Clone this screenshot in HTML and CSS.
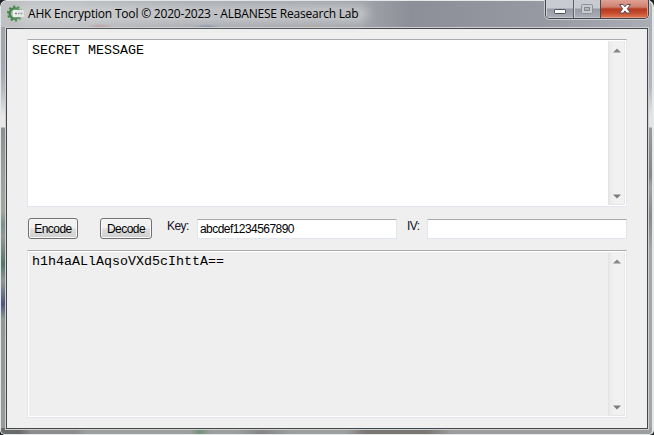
FILE: index.html
```html
<!DOCTYPE html>
<html lang="en">
<head>
<meta charset="utf-8">
<title>AHK Encryption Tool</title>
<link rel="stylesheet" href="styles.css">
</head>
<body>
<div class="window">
  <header class="titlebar">
    <svg class="app-icon" width="17" height="17" viewBox="0 0 17 17">
      <circle cx="8" cy="8.500" r="7" fill="none" stroke="#438647" stroke-width="2" stroke-dasharray="2.200 2.200"/>
      <circle cx="8" cy="8.500" r="5.200" fill="none" stroke="#438647" stroke-width="2.600"/>
      <rect x="6" y="5" width="11" height="7" rx="1" fill="#f1f2f1"/>
      <path d="M8 8.500h2M11 8.500h1.500M13.500 8.500h2" fill="none" stroke="#777" stroke-width="1.600"/>
    </svg>
    <h1 class="title">AHK Encryption Tool © 2020-2023 - ALBANESE Reasearch Lab</h1>
    <div class="controls">
      <span class="control minimize"><svg width="27" height="18"><rect x="8.500" y="9.500" width="11" height="4" rx=".7" fill="#fff" stroke="#50535b"/></svg></span>
      <span class="control maximize"><svg width="26" height="18"><rect x="7.500" y="4.500" width="11" height="9" rx="1" fill="#c9cacf" stroke="#8e9096"/><rect x="10.500" y="7.500" width="5" height="3" fill="#b2b4b9" stroke="#85878d"/></svg></span>
      <span class="control close"><svg width="46" height="18"><path d="M18.500 4.500h3.700l1.800 2.300 1.800-2.300h3.700l-3.200 4.300 3.200 4.200h-3.900l-1.600-2.100-1.600 2.100h-3.900l3.200-4.200z" fill="#fff" stroke="#5c5058"/></svg></span>
    </div>
  </header>
  <main class="client">
    <section class="box message">
      <div class="text">SECRET MESSAGE</div>
      <div class="scroll"><svg width="8" height="5"><path d="M0 4.500L4 .5l4 4z" fill="#858585"/></svg><svg width="8" height="5"><path d="M0 .5h8L4 4.500z" fill="#7b7b7b"/></svg></div>
    </section>
    <div class="tools">
      <button class="btn encode">Encode</button>
      <button class="btn decode">Decode</button>
      <span class="label key">Key:</span>
      <div class="field"><span>abcdef1234567890</span></div>
      <span class="label iv">IV:</span>
      <div class="field"></div>
    </div>
    <section class="box result">
      <div class="text">h1h4aALlAqsoVXd5cIhttA==</div>
      <div class="scroll"><svg width="8" height="5"><path d="M0 4.500L4 .5l4 4z" fill="#858585"/></svg><svg width="8" height="5"><path d="M0 .5h8L4 4.500z" fill="#7b7b7b"/></svg></div>
    </section>
  </main>
</div>
</body>
</html>
```
FILE: styles.css
```css
* { box-sizing: border-box; }
html { background: #202226; }
body { margin: 0; overflow: hidden; }
.window {
  width: 654px; height: 435px;
  border: 1px solid #e4e8e8;
  border-right-width: 2px;
  border-radius: 7px 7px 5px 5px;
  padding: 0 4px 4px 5px;
  background:
    linear-gradient(90deg, #6a6a6a 0 18px, #8c8d8c 30px 75px, #9d9f9e 85px 190px, #75927a 198px, #9d9f9e 210px 235px, #858585 260px, #9d9f9e 290px 345px, #797674 365px 425px, #9d9d9d 450px) 0 100% / 100% 6px no-repeat,
    linear-gradient(180deg, #a0a4aa 0, #a5a8b0 70px, #b8bbc2 90px, #e8e8e8 115px 126px, #8c8f90 127px, #9aa09d 170px, #a4a69e 210px, #78908a 224px, #929896 235px, #57746b 263px, #909797 280px, #4d557e 303px, #909896 318px, #999c9b 100%) 0 0 / 6px 100% no-repeat,
    linear-gradient(180deg, #a6a9b1 0, #b3b6be 85px, #e4e4e5 115px 126px, #999 127px, #858585 175px, #a1a1a1 185px, #888 215px, #a5a5a5 250px) 100% 0 / 6px 100% no-repeat,
    #a2a5ab;
}
.titlebar {
  height: 26px; margin: 0 -4px 0 -5px; padding-left: 6px;
  display: flex; align-items: flex-start;
  border-radius: 6px 6px 0 0;
  background:
    radial-gradient(ellipse 13px 5px at 99px 27px, #bb8b8d, transparent),
    radial-gradient(ellipse 14px 4px at 206px 27px, #657d99, transparent),
    radial-gradient(ellipse 12px 4px at 310px 27px, #b39e85, transparent),
    linear-gradient(90deg, #bfc1c3 0, #babcbe 75px, #a6a8ad 190px, #9da0a6 370px, #8c8f98 410px, #9699a2 540px, #aaadb4 100%);
}
.app-icon { flex: none; margin-top: 4px; }
.title {
  flex: none; margin: 7px 0 0 -2px; padding: 0 6px; height: 12px;
  font: 400 12px/12px "Open Sans", "Noto Sans", sans-serif;
  letter-spacing: -0.2px; white-space: nowrap; color: #000;
  border-radius: 6px;
  background: rgba(215, 217, 220, .5);
  box-shadow: 0 0 9px 5px rgba(215, 217, 220, .5);
}
.controls {
  display: flex; height: 19px; margin: -1px 3px 0 auto;
  border: 1px solid #42434b; border-top: 0;
  border-radius: 0 0 5px 5px;
  box-shadow: 0 0 0 1px #c8cbd0;
  overflow: hidden;
}
.control {
  height: 18px;
  box-shadow: inset 1px 0 #d1d2d8, inset 0 -1px #c4c6ce;
  background: linear-gradient(#c9cbd2 0 8px, #979aa4 9px, #acafb8 18px);
}
.control svg { display: block; }
.minimize { width: 28px; border-right: 1px solid #5d6069; }
.maximize { width: 27px; border-right: 1px solid #554549; }
.close { width: 47px; background: linear-gradient(#dda294 0, #d08070 7px, #b43b22 9px, #c64b2b 13px, #de7d5a 18px); box-shadow: inset 0 -1px #df9984, inset -1px 0 #df9984; }
.client {
  width: 642px; height: 401px; background: #efefef;
  border: 1px solid #43464a;
  box-shadow: 0 0 0 1px #cfd1d1;
  padding: 10px 20px;
  margin-top: 1px;
}
.box {
  width: 600px; height: 168px; display: flex;
  border: 1px solid #e2e6ee; border-top-color: #aaabb1;
  padding: 1px; background: #fff;
}
.result { box-shadow: inset 0 0 0 1px #fff; background: #efefef; }
.text {
  flex: 1; padding: 2px 0 0 3px;
  font: 13.333px/15px "Liberation Mono", monospace; color: #000;
}
.scroll {
  width: 17px; display: flex; flex-direction: column;
  justify-content: space-between; align-items: center;
  padding: 6px 0 5px 0;
  border: 1px solid #e6e6e6; border-top-color: #f0f0f0; border-left-color: #e3e3e3;
  background: linear-gradient(90deg, #e9e9e9, #f1f1f1 5px);
}
.tools {
  display: flex; height: 43px; padding-top: 11px;
  font: 12px/14px "Liberation Sans", sans-serif; letter-spacing: -0.55px;
}
.btn {
  height: 21px; padding: 1px 0 0; border: 1px solid #707070; border-radius: 3px;
  box-shadow: inset 0 0 0 1px #f9f9f9;
  background: linear-gradient(#f1f1f1 0 9px, #dedede 10px, #cfcfcf);
  font: inherit; letter-spacing: -0.55px; color: #000; white-space: nowrap;
}
.encode { width: 50px; margin-left: 1px; }
.decode { width: 52px; margin-left: 22px; }
.label { color: #101028; padding-top: 1px; }
.key { width: 45px; padding-left: 15px; }
.iv { width: 30px; padding-left: 10px; }
.field {
  width: 200px; height: 20px; margin-top: 1px; padding: 2px 0 0 2px;
  border: 1px solid #e2e6ee; border-top-color: #aaabb1; border-radius: 1px; background: #fff;
}
```
